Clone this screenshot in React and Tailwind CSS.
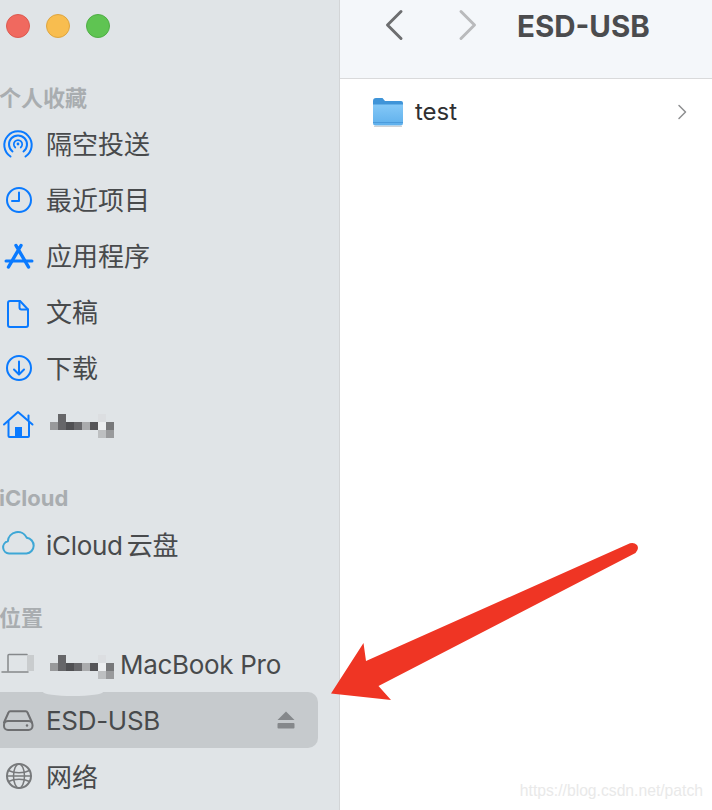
const FONT = "font-['Inter','Noto_Sans_CJK_SC',sans-serif]";

// each sidebar icon is drawn in a 46x56 box that fills the row's icon column
function RowIcon({ children, color = '#0a7aff' }) {
  return (
    <svg width="46" height="56" viewBox="0 0 46 56" fill="none" stroke={color} strokeWidth="2" strokeLinecap="round" strokeLinejoin="round" className="shrink-0">
      {children}
    </svg>
  );
}

const AirDrop = () => (
  <RowIcon>
    <path d="M10.500 39.500a13.700 13.700 0 1 1 15 0" />
    <path d="M12.500 34.500a9 9 0 1 1 11 0" />
    <path d="M15.300 30.500a4.200 4.200 0 1 1 5.400 0" strokeWidth="1.700" />
    <circle cx="18" cy="27" r="1.400" fill="#0a7aff" stroke="none" />
  </RowIcon>
);

const Clock = () => (
  <RowIcon>
    <circle cx="19" cy="27" r="12" />
    <path d="M19 19.500V28H12" />
  </RowIcon>
);

const AppStore = () => (
  <RowIcon>
    <path d="M21 16.500 8.500 38M16 16.500 28.500 38" strokeWidth="3.400" />
    <path d="M6 32h26" strokeWidth="3" />
  </RowIcon>
);

const Doc = () => (
  <RowIcon>
    <path d="M10 16h10l8 8.500v15.500a2 2 0 0 1-2 2H10a2 2 0 0 1-2-2V18a2 2 0 0 1 2-2z" />
    <path d="M19.500 16v6.500a2 2 0 0 0 2 2H28" />
  </RowIcon>
);

const Download = () => (
  <RowIcon>
    <circle cx="19" cy="27" r="12" />
    <path d="M19 20.500V33M14 28.500l5 5 5-5" />
  </RowIcon>
);

const Home = () => (
  <RowIcon>
    <path d="M4 27.500 18 15l14.500 12.500" />
    <path d="M8.500 24.500V39a1 1 0 0 0 1 1H28a1 1 0 0 0 1-1V24.500" />
    <path d="M28.500 18.500v4" />
    <rect x="15" y="30" width="7" height="10" fill="#0a7aff" stroke="none" />
  </RowIcon>
);

const Cloud = () => (
  <RowIcon color="#3ea7d6">
    <path d="M9 36.500a6.200 6.200 0 0 1-1.200-12.200 10 10 0 0 1 19-3.500 7.900 7.900 0 0 1-.3 15.700z" />
  </RowIcon>
);

const Laptop = () => (
  <RowIcon color="#85888b">
    <path d="M8 35V19.500a1 1 0 0 1 1-1h18" strokeWidth="1.500" />
    <path d="M2 36h26" strokeWidth="1.500" />
    <rect x="27" y="19" width="7" height="16" fill="#c9ccce" stroke="none" />
  </RowIcon>
);

const Drive = () => (
  <RowIcon color="#6e6f71">
    <path d="M4 30.500 8.500 20.500a2 2 0 0 1 1.800-1.300h15.400a2 2 0 0 1 1.800 1.300l4.500 10" />
    <rect x="4" y="29" width="28.500" height="9" rx="4" />
    <circle cx="27" cy="33.500" r="1.200" fill="#6e6f71" stroke="none" />
  </RowIcon>
);

const Globe = () => (
  <RowIcon color="#77797b">
    <circle cx="19" cy="27" r="12" />
    <ellipse cx="19" cy="27" rx="5.500" ry="12" strokeWidth="1.500" />
    <path d="M8.500 21.500c6 3 15 3 21 0M8.500 32.500c6-3 15-3 21 0M7 27h24" strokeWidth="1.500" />
  </RowIcon>
);

const EjectIcon = () => (
  <svg width="18" height="18" viewBox="0 0 18 18" className="shrink-0" fill="#85888b">
    <path d="M9 0.500 17.500 9H0.500z" />
    <rect x="0.500" y="12" width="17" height="5.500" rx="1" />
  </svg>
);

// the censored user name: blocks of 8px mosaic
const mosaic = [
  [8, 0, '#666669'], [48, 0, '#dcdee1'],
  [0, 8, '#98999b'], [8, 8, '#666669'], [16, 8, '#505053'], [24, 8, '#68686b'], [32, 8, '#aaabad'], [40, 8, '#555558'], [48, 8, '#eceef0'], [56, 8, '#77787a'],
  [48, 16, '#bdbfc1'], [56, 16, '#999a9c'],
];

function Mosaic({ className = '' }) {
  return (
    <svg width="64" height="24" viewBox="0 0 64 24" className={`shrink-0 ${className}`}>
      {mosaic.map(([x, y, fill]) => (
        <rect key={`${x}-${y}`} x={x} y={y} width="8" height="8" fill={fill} />
      ))}
    </svg>
  );
}

function SectionLabel({ children, className = '' }) {
  return <div className={`flex h-[39px] items-center text-[22px] font-bold leading-none text-[#a9adb0] ${className}`}>{children}</div>;
}

function Row({ icon, children, selected }) {
  return (
    <div className={`flex h-14 items-center text-[26px] leading-none text-[#484a4c] ${selected ? 'w-[318px] rounded-r-[10px] bg-[#c6cacd]' : ''}`}>
      {icon}
      {children}
    </div>
  );
}

function Sidebar() {
  return (
    <aside className="relative w-[340px] shrink-0 border-r border-[#d3d5d7] bg-[#e0e4e7]">
      <div className="flex h-[52px] items-center gap-4 pl-1.5">
        <span className="h-6 w-6 rounded-full border border-[#dc5a50] bg-[#f0695f]" />
        <span className="h-6 w-6 rounded-full border border-[#dea540] bg-[#f8bd4f]" />
        <span className="h-6 w-6 rounded-full border border-[#4fae45] bg-[#5fc452]" />
      </div>

      <SectionLabel className="mt-[26px] -ml-px">个人收藏</SectionLabel>
      <Row icon={<AirDrop />}>隔空投送</Row>
      <Row icon={<Clock />}>最近项目</Row>
      <Row icon={<AppStore />}>应用程序</Row>
      <Row icon={<Doc />}>文稿</Row>
      <Row icon={<Download />}>下载</Row>
      <Row icon={<Home />}>
        <Mosaic className="ml-1 mt-[2px]" />
      </Row>

      <SectionLabel className="mt-[25px] -ml-px">iCloud</SectionLabel>
      <Row icon={<Cloud />}>
        <span className="mt-[2px] tracking-[-0.3px] [word-spacing:-3px]">iCloud 云盘</span>
      </Row>

      <SectionLabel className="mt-[25px] -mb-px -ml-px">位置</SectionLabel>
      <Row icon={<Laptop />}>
        <Mosaic className="ml-1 mt-[6px]" />
        <span className="ml-[6px] mt-[2px] tracking-[-0.3px]">MacBook Pro</span>
      </Row>
      <div className="relative">
        <Row icon={<Drive />} selected>
          <span className="mt-[2px] tracking-[-0.3px]">ESD-USB</span>
          <span className="ml-auto mr-[23px] flex">
            <EjectIcon />
          </span>
        </Row>
        {/* leftover of the retouching around the name, lies over the selection */}
        <span className="absolute left-[43px] top-0 h-1 w-[60px] rounded-b-[30px_4px] bg-[#e0e4e7]" />
      </div>
      <div className="mt-px">
        <Row icon={<Globe />}>
          <span className="mt-[2px]">网络</span>
        </Row>
      </div>
    </aside>
  );
}

const Folder = () => (
  <svg width="30" height="30" viewBox="0 0 30 30" className="shrink-0">
    <defs>
      <linearGradient id="folderBody" x1="0" y1="0" x2="0" y2="1">
        <stop offset="0" stopColor="#84c8f7" />
        <stop offset="1" stopColor="#5fb0ec" />
      </linearGradient>
    </defs>
    <path d="M0 4a3 3 0 0 1 3-3h6.500l2.500 3h16a2 2 0 0 1 2 2v6H0z" fill="#3f94d8" />
    <path d="M0 7.500h30V26a2.500 2.500 0 0 1-2.500 2.500h-25A2.500 2.500 0 0 1 0 26z" fill="url(#folderBody)" />
    <path d="M0 25.500h30" stroke="#4b9bdc" strokeWidth="1" />
    <path d="M1 29.300h28" stroke="#c4c8cc" strokeWidth="1" />
  </svg>
);

function Content() {
  return (
    <main className="min-w-0 flex-1 bg-white">
      <header className="flex h-[79px] items-start border-b border-[#d9dadb] bg-[#f4f7fa] pl-[44px] pt-[9px]">
        <svg width="22" height="32" viewBox="0 0 22 32" fill="none" stroke="#6d6e70" strokeWidth="3" strokeLinecap="round" strokeLinejoin="round" className="shrink-0">
          <path d="M17 2.500 3.500 16 17 29.500" />
        </svg>
        <svg width="22" height="32" viewBox="0 0 22 32" fill="none" stroke="#b9babc" strokeWidth="3" strokeLinecap="round" strokeLinejoin="round" className="ml-[50px] shrink-0">
          <path d="M5 2.500 18.500 16 5 29.500" />
        </svg>
        <h1 className="ml-[39px] text-[29.500px] font-bold leading-[34px] text-[#4b4c4e]">ESD-USB</h1>
      </header>
      <div className="flex h-[66px] items-center pl-[33px] pr-[25px]">
        <Folder />
        <span className="ml-3 text-2xl leading-none text-[#2f3032]">test</span>
        <svg width="10" height="16" viewBox="0 0 10 16" fill="none" stroke="#8d8e90" strokeWidth="1.500" strokeLinecap="round" strokeLinejoin="round" className="ml-auto shrink-0">
          <path d="M2 1.500 8.500 8 2 14.500" />
        </svg>
      </div>
    </main>
  );
}

export default function App() {
  return (
    <div className={`relative flex h-[810px] w-[712px] overflow-hidden bg-white ${FONT}`}>
      <Sidebar />
      <Content />

      {/* annotation arrow drawn over the screenshot */}
      <svg width="712" height="810" viewBox="0 0 712 810" className="pointer-events-none absolute left-0 top-0">
        <path
          d="M630 543.300Q634 542 637 545Q639.500 549 635.500 553L378.500 686L391 700L331 693.500L363.500 643L366 661Z"
          fill="#ef3524"
        />
      </svg>

      <span className="absolute bottom-[11px] right-[9px] font-['Liberation_Sans',sans-serif] text-[15.700px] leading-none text-[#e9e9e9]">
        https://blog.csdn.net/patch
      </span>
    </div>
  );
}
